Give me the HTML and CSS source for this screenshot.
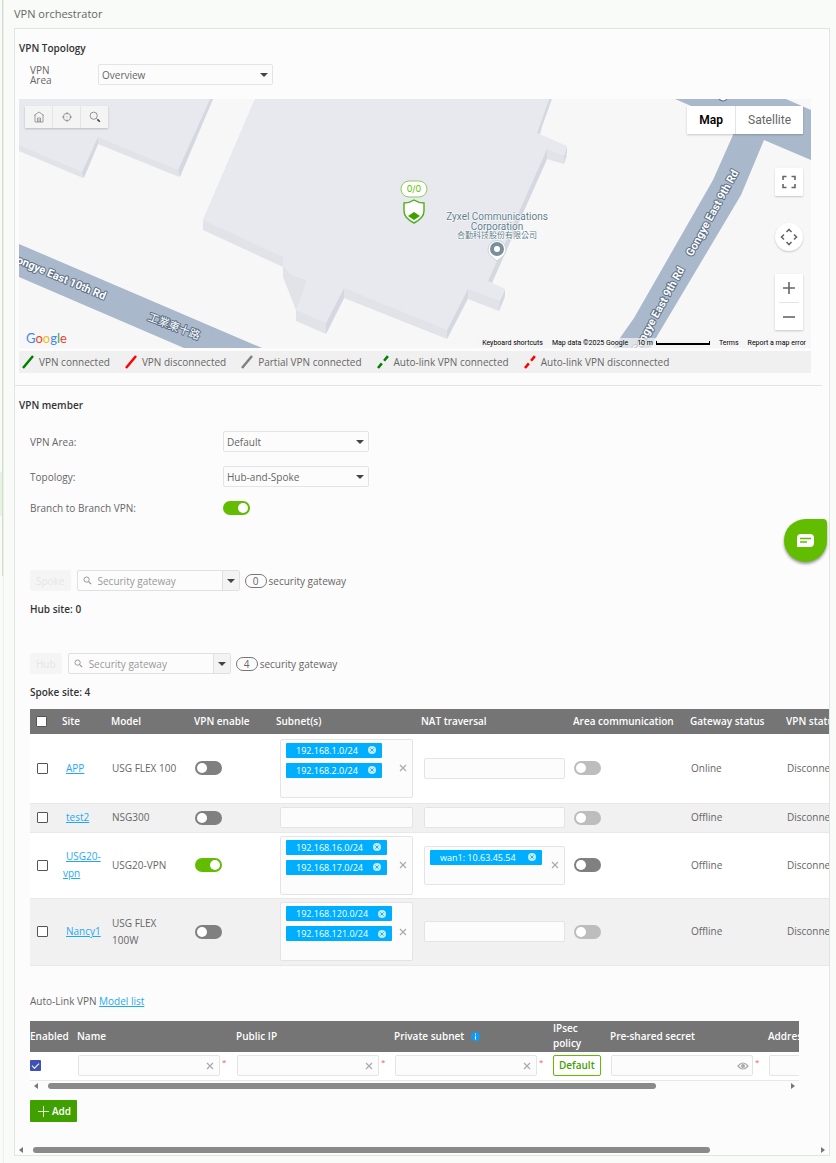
FILE: index.html
```html
<!DOCTYPE html>
<html lang="en">
<head>
    <meta charset="UTF-8">
    <title>VPN orchestrator</title>
    <link rel="stylesheet" href="styles.css">
</head>
<body>
<!-- icons used more than once -->
<svg class="defs" aria-hidden="true">
    <symbol id="x" viewBox="0 0 8 8"><path d="M1 1l6 6M7 1L1 7" fill="none" stroke="#aaa" stroke-width="1.2"/></symbol>
    <symbol id="del" viewBox="0 0 8 8"><circle cx="4" cy="4" r="4" fill="#c4eaff"/><path d="M2.4 2.4l3.2 3.2M5.6 2.4L2.4 5.6" stroke="#00aeff" stroke-width=".9"/></symbol>
    <symbol id="search" viewBox="0 0 10 10"><circle cx="4" cy="4" r="2.9" fill="none" stroke="#999" stroke-width="1.1"/><path d="M6.2 6.2L9 9" stroke="#999" stroke-width="1.4"/></symbol>
</svg>
<div class="side"><div class="side-current"></div></div>
<main class="main">
    <h1>VPN orchestrator</h1>
    <div class="panel">
        <section class="topology">
            <h2>VPN Topology</h2>
            <div class="area-row">
                <label for="overview">VPN Area</label>
                <span class="select"><select id="overview"><option>Overview</option></select></span>
            </div>
            <div class="map">
                <svg class="map-canvas" viewBox="19 99 792 249" preserveAspectRatio="xMidYMid slice">
                    <rect x="19" y="99" width="792" height="249" fill="#f7f7f7"/>
                    <!-- buildings -->
                    <path d="M19 151L83 178 98 144 179 177 213 99H19z" fill="#e1e3e9"/>
                    <path d="M82 172L98 137V144L84 178zM178 170L210 99H213L180 177z" fill="#d5d8e1"/>
                    <path d="M19 145L82 172 98 137 178 170 210 99H19z" fill="#e8e9ee"/>
                    <path d="M255 99H549L538 143 567 156 564 164 547 159 488 291 505 297 499 311 468 299 447 339 344 298 326 334 296 321 296 310 283 277V267L203 230V220z" fill="#e1e3e9"/>
                    <path d="M549 99h3l-13 36-2-2zM547 149v10l-55 124-4-2zM567 146v6l-3 12v-8zM505 289v7l-6 15 1-10zM468 289v9l-21 41v-9zM344 288v10l-18 36v-11z" fill="#d5d8e0"/>
                    <path d="M255 99H549L537 133 567 146 564 156 547 149 488 281 505 289 500 301 468 289 447 330 344 288 326 323 296 310 307 280 291 275 283 266V257L203 220z" fill="#e8e9ee"/>
                    <!-- roads -->
                    <path d="M19 244L262 348H184L19 277z" fill="#a9b8ca"/>
                    <path d="M675 99H786L811 110V160L764 140 741 195 650 348H613L634 318 713 180 733 135V124z" fill="#a9b8ca"/>
                    <g class="road">
                        <text x="104" y="300" text-anchor="end" transform="rotate(23 104 300)">Gongye East 10th Rd</text>
                        <text class="road-cjk" x="147" y="320" transform="rotate(21 147 320)">工業東十路</text>
                        <text x="692" y="257" transform="rotate(-61 692 257)">Gongye East 9th Rd</text>
                        <text x="638" y="354" transform="rotate(-61 638 354)">Gongye East 9th Rd</text>
                        <text x="724" y="102" transform="rotate(-61 724 102)">Gongye</text>
                    </g>
                    <g class="poi">
                        <text x="497" y="220">Zyxel Communications</text>
                        <text x="497" y="230">Corporation</text>
                        <text class="poi-cjk" x="497" y="238">合勤科技股份有限公司</text>
                    </g>
                    <path d="M497 261l-5-4a9 9 0 1 1 10 0z" fill="#fff" stroke="#ccd1d5"/>
                    <circle cx="497" cy="249" r="5" fill="#fff" stroke="#78909c" stroke-width="4"/>
                    <rect x="401" y="181" width="26" height="16" rx="8" fill="#fff" stroke="#8fca55"/>
                    <text class="count" x="414" y="192">0/0</text>
                    <path d="M414 200c3 2 6 3 10 3v8c0 6-4 9-10 12-6-3-10-6-10-12v-8c4 0 7-1 10-3z" fill="#fff" stroke="#4cae14" stroke-width="1.4"/>
                    <path d="M414 212l6 4-6 4-6-4z" fill="#3fa000"/>
                </svg>
                <div class="map-tools">
                    <button aria-label="Home"><svg width="12" height="12" viewBox="0 0 12 12" fill="none" stroke="#888" stroke-width=".8"><path d="M1 4.500L6 1l5 3.500M2 4v7h8V4M4.500 11V7h3v4M6 8v3"/></svg></button>
                    <button aria-label="Locate"><svg width="10" height="10" viewBox="0 0 10 10" fill="none" stroke="#888" stroke-width=".8"><circle cx="5" cy="5" r="3.700"/><path d="M5 0v2.500M5 7.500V10M0 5h2.500M7.500 5H10M4.500 5h1"/></svg></button>
                    <button aria-label="Search"><svg width="12" height="12" viewBox="0 0 12 12" fill="none" stroke="#888" stroke-width=".9"><circle cx="4.700" cy="4.700" r="3.600"/><path d="M7.400 7.400l1 1"/><path d="M8.400 8.400l2.400 2.400" stroke="#444" stroke-width="1.600"/></svg></button>
                </div>
                <div class="map-type"><button class="on">Map</button><button>Satellite</button></div>
                <div class="map-nav">
                    <button class="full" aria-label="Fullscreen"><svg width="14" height="14" viewBox="0 0 14 14" fill="none" stroke="#666" stroke-width="1.600"><path d="M1 5V1.500h3.500M9.500 1.500H13V5M13 9v3.500H9.500M4.500 12.500H1V9"/></svg></button>
                    <button class="pan" aria-label="Move map"><svg width="18" height="18" viewBox="0 0 18 18" fill="none" stroke="#666" stroke-width="1.600"><path d="M6.500 4L9 1.500 11.500 4M6.500 14L9 16.500l2.500-2.500M4 6.500L1.500 9 4 11.500M14 6.500L16.500 9 14 11.500"/></svg></button>
                    <div class="zoom">
                        <button aria-label="Zoom in"><svg width="12" height="12" viewBox="0 0 12 12" stroke="#666" stroke-width="1.600"><path d="M0 6h12M6 0v12"/></svg></button>
                        <button aria-label="Zoom out"><svg width="12" height="12" viewBox="0 0 12 12" stroke="#666" stroke-width="1.600"><path d="M0 6h12"/></svg></button>
                    </div>
                </div>
                <div class="logo"><span class="b">G</span><span class="r">o</span><span class="y">o</span><span class="b">g</span><span class="g">l</span><span class="r">e</span></div>
                <div class="map-foot">
                    <span>Keyboard shortcuts</span>
                    <span>Map data ©2025 Google</span>
                    <span class="scale">10 m<i></i></span>
                    <span>Terms</span>
                    <span>Report a map error</span>
                </div>
            </div>
            <ul class="legend">
                <li><svg width="12" height="14" viewBox="0 0 12 14"><path d="M1 13L11 1" stroke="green" stroke-width="2.500"/></svg>VPN connected</li>
                <li><svg width="12" height="14" viewBox="0 0 12 14"><path d="M1 13L11 1" stroke="red" stroke-width="2.500"/></svg>VPN disconnected</li>
                <li><svg width="12" height="14" viewBox="0 0 12 14"><path d="M1 13L11 1" stroke="gray" stroke-width="2.500"/></svg>Partial VPN connected</li>
                <li><svg width="12" height="14" viewBox="0 0 12 14"><path d="M1 13L11 1" stroke="green" stroke-width="2.500" stroke-dasharray="6 3.500"/></svg>Auto-link VPN connected</li>
                <li><svg width="12" height="14" viewBox="0 0 12 14"><path d="M1 13L11 1" stroke="red" stroke-width="2.500" stroke-dasharray="6 3.500"/></svg>Auto-link VPN disconnected</li>
            </ul>
        </section>
        <hr>
        <section class="member">
            <h2>VPN member</h2>
            <div class="form">
                <label for="area">VPN Area:</label>
                <span class="select"><select id="area"><option>Default</option></select></span>
                <label for="topo">Topology:</label>
                <span class="select"><select id="topo"><option>Hub-and-Spoke</option></select></span>
                <label for="branch">Branch to Branch VPN:</label>
                <input class="switch" type="checkbox" id="branch" checked>
            </div>

            <div class="filter">
                <button class="ghost" disabled>Spoke</button>
                <div class="combo"><svg width="9" height="9"><use href="#search"/></svg><input type="text" placeholder="Security gateway" aria-label="Hub security gateway"><button class="drop" aria-label="Hub options"></button></div>
                <span class="pill">0</span><span>security gateway</span>
            </div>
            <h3>Hub site: 0</h3>

            <div class="filter second">
                <button class="ghost" disabled>Hub</button>
                <div class="combo"><svg width="9" height="9"><use href="#search"/></svg><input type="text" placeholder="Security gateway" aria-label="Spoke security gateway"><button class="drop" aria-label="Spoke options"></button></div>
                <span class="pill">4</span><span>security gateway</span>
            </div>
            <h3>Spoke site: 4</h3>

            <div class="clip">
                <table class="sites">
                    <colgroup><col class="w27"><col class="w49"><col class="w83"><col class="w82"><col class="w145"><col class="w152"><col class="w117"><col class="w96"><col class="w96"></colgroup>
                    <thead>
                    <tr><th><input class="box" type="checkbox" aria-label="Select all"></th><th>Site</th><th>Model</th><th>VPN enable</th><th>Subnet(s)</th><th>NAT traversal</th><th>Area communication</th><th>Gateway status</th><th>VPN status</th></tr>
                    </thead>
                    <tbody>
                    <tr>
                        <td><input class="box" type="checkbox" aria-label="Select APP"></td>
                        <td><a href="#">APP</a></td>
                        <td>USG FLEX 100</td>
                        <td><input class="switch" type="checkbox" aria-label="Enable APP"></td>
                        <td><div class="chips"><div class="list"><span class="chip">192.168.1.0/24<svg width="8" height="8"><use href="#del"/></svg></span><span class="chip">192.168.2.0/24<svg width="8" height="8"><use href="#del"/></svg></span></div><button class="clear" aria-label="Clear"><svg width="8" height="8"><use href="#x"/></svg></button></div></td>
                        <td><input class="text" type="text" aria-label="NAT traversal APP"></td>
                        <td><input class="switch" type="checkbox" aria-label="Area communication APP" disabled></td>
                        <td>Online</td><td>Disconnected</td>
                    </tr>
                    <tr>
                        <td><input class="box" type="checkbox" aria-label="Select test2"></td>
                        <td><a href="#">test2</a></td>
                        <td>NSG300</td>
                        <td><input class="switch" type="checkbox" aria-label="Enable test2"></td>
                        <td><input class="text" type="text" aria-label="Subnets test2"></td>
                        <td><input class="text" type="text" aria-label="NAT traversal test2"></td>
                        <td><input class="switch" type="checkbox" aria-label="Area communication test2" disabled></td>
                        <td>Offline</td><td>Disconnected</td>
                    </tr>
                    <tr>
                        <td><input class="box" type="checkbox" aria-label="Select USG20-vpn"></td>
                        <td><a href="#">USG20-vpn</a></td>
                        <td>USG20-VPN</td>
                        <td><input class="switch" type="checkbox" aria-label="Enable USG20-vpn" checked></td>
                        <td><div class="chips"><div class="list"><span class="chip">192.168.16.0/24<svg width="8" height="8"><use href="#del"/></svg></span><span class="chip">192.168.17.0/24<svg width="8" height="8"><use href="#del"/></svg></span></div><button class="clear" aria-label="Clear"><svg width="8" height="8"><use href="#x"/></svg></button></div></td>
                        <td><div class="chips"><div class="list"><span class="chip wide">wan1: 10.63.45.54<svg width="8" height="8"><use href="#del"/></svg></span></div><button class="clear" aria-label="Clear"><svg width="8" height="8"><use href="#x"/></svg></button></div></td>
                        <td><input class="switch" type="checkbox" aria-label="Area communication USG20-vpn"></td>
                        <td>Offline</td><td>Disconnected</td>
                    </tr>
                    <tr>
                        <td><input class="box" type="checkbox" aria-label="Select Nancy1"></td>
                        <td><a href="#">Nancy1</a></td>
                        <td>USG FLEX 100W</td>
                        <td><input class="switch" type="checkbox" aria-label="Enable Nancy1"></td>
                        <td><div class="chips"><div class="list"><span class="chip">192.168.120.0/24<svg width="8" height="8"><use href="#del"/></svg></span><span class="chip">192.168.121.0/24<svg width="8" height="8"><use href="#del"/></svg></span></div><button class="clear" aria-label="Clear"><svg width="8" height="8"><use href="#x"/></svg></button></div></td>
                        <td><input class="text" type="text" aria-label="NAT traversal Nancy1"></td>
                        <td><input class="switch" type="checkbox" aria-label="Area communication Nancy1" disabled></td>
                        <td>Offline</td><td>Disconnected</td>
                    </tr>
                    </tbody>
                </table>
            </div>

            <p class="auto">Auto-Link VPN <a href="#">Model list</a></p>
            <div class="auto-wrap">
                <div class="clip">
                    <table class="links">
                        <colgroup><col class="w47"><col class="w159"><col class="w158"><col class="w159"><col class="w57"><col class="w158"><col class="w159"></colgroup>
                        <thead>
                        <tr><th>Enabled</th><th>Name</th><th>Public IP</th><th>Private subnet <svg class="info" width="9" height="9" viewBox="0 0 9 9"><circle cx="4.500" cy="4.500" r="4.500" fill="#0a9bff"/><path d="M4.500 1.500v1.200M4.500 3.800V7.500" stroke="#fff"/></svg></th><th>IPsec policy</th><th>Pre-shared secret</th><th>Address</th></tr>
                        </thead>
                        <tbody>
                        <tr>
                            <td><input class="box blue" type="checkbox" aria-label="Enabled" checked></td>
                            <td><div class="field"><input class="text" type="text" aria-label="Name"><button class="clear" aria-label="Clear name"><svg width="8" height="8"><use href="#x"/></svg></button><b>*</b></div></td>
                            <td><div class="field"><input class="text" type="text" aria-label="Public IP"><button class="clear" aria-label="Clear public IP"><svg width="8" height="8"><use href="#x"/></svg></button><b>*</b></div></td>
                            <td><div class="field"><input class="text" type="text" aria-label="Private subnet"><button class="clear" aria-label="Clear private subnet"><svg width="8" height="8"><use href="#x"/></svg></button><b>*</b></div></td>
                            <td><button class="policy">Default</button></td>
                            <td><div class="field"><input class="text" type="password" aria-label="Pre-shared secret"><button class="clear" aria-label="Show secret"><svg width="12" height="8" viewBox="0 0 12 8"><path d="M1 4q5-6 10 0-5 6-10 0z" fill="none" stroke="#aaa" stroke-width="1.200"/><circle cx="6" cy="4" r="2" fill="#aaa"/></svg></button><b>*</b></div></td>
                            <td><div class="field"><input class="text" type="text" aria-label="Address"></div></td>
                        </tr>
                        </tbody>
                    </table>
                </div>
                <div class="scroll"><div class="track"><div class="thumb inner"></div></div></div>
            </div>
            <button class="add"><svg width="11" height="11" viewBox="0 0 11 11" stroke="#fff" stroke-width=".8"><path d="M0 5.500h11M5.500 0v11"/></svg>Add</button>
        </section>
        <div class="scroll outer-scroll"><div class="track"><div class="thumb outer"></div></div></div>
    </div>
</main>
<button class="chat" aria-label="Chat"><svg width="17" height="13" viewBox="0 0 17 13"><path d="M4 0h9q4 0 4 4v5q0 4-4 4H0V4q0-4 4-4z" fill="#fff"/><path d="M3 4.500h11M3 8h7" stroke="#62bd00" stroke-width="1.400"/></svg></button>
</body>
</html>
```

FILE: styles.css
```css
* {
    box-sizing: border-box;
    margin: 0;
    padding: 0;
}

body {
    display: flex;
    min-height: 100vh;
    background: #f9fbf8;
    color: #666;
    font: 10px/14px "Open Sans", "Noto Sans CJK TC", sans-serif;
    overflow: hidden;
}

button, input, select {
    font: inherit;
    color: inherit;
    border: 0;
    background: none;
}

button {
    display: flex;
    align-items: center;
    justify-content: center;
}

svg {
    flex: none;
}

.defs {
    position: absolute;
    width: 0;
    height: 0;
}

.side {
    width: 3px;
    height: 576px;
    padding-top: 472px;
    border-right: 1px solid #d4dccf;
}

.side-current {
    height: 44px;
    background: #e6f4df;
}

.main {
    flex: 1;
    min-width: 0;
    padding: 0 6px 0 10px;
    border-left: 1px solid #eceeeb;
}

h1 {
    font-size: 11px;
    font-weight: 400;
    line-height: 28px;
}

h2, h3 {
    font-size: 10px;
    font-weight: 600;
    color: #333;
}

.panel {
    border: 1px solid #e2e4e1;
    background: #fcfcfc;
}

.topology {
    padding: 12px 18px 12px 4px;
}

.area-row {
    display: flex;
    align-items: center;
    margin: 9px 0 14px 11px;
}

.area-row label {
    width: 68px;
    padding-right: 36px;
    line-height: 10px;
}

.area-row .select {
    width: 175px;
}

.select {
    position: relative;
}

.select select {
    display: block;
    width: 100%;
    height: 21px;
    padding: 0 3px;
    border: 1px solid #e4e4e4;
    border-radius: 2px;
    appearance: none;
}

.select::after, .drop::after {
    content: "";
    border: 4px solid transparent;
    border-top-color: #444;
    border-bottom: 0;
}

.select::after {
    position: absolute;
    right: 5px;
    top: 9px;
}

/* map */
.map {
    position: relative;
    height: 249px;
    overflow: hidden;
    font-family: Roboto, sans-serif;
}

.map-canvas {
    display: block;
    width: 100%;
    height: 100%;
}

.road text {
    font: 700 11px Roboto, "Noto Sans CJK TC", sans-serif;
    fill: #fff;
    stroke: #5d6f87;
    stroke-width: 2px;
    stroke-linejoin: round;
    paint-order: stroke;
}

.road .road-cjk {
    font-weight: 400;
}

.poi text {
    font: 10px Roboto, sans-serif;
    fill: #607d8b;
    text-anchor: middle;
    stroke: #fff;
    stroke-width: 1px;
    paint-order: stroke;
}

.poi .poi-cjk {
    font: 8px "Noto Sans CJK TC", sans-serif;
}

.count {
    font: 9px Inter, sans-serif;
    fill: #62bd00;
    text-anchor: middle;
}

.map-tools, .map-type, .map-nav, .map-foot, .logo {
    position: absolute;
}

.map-tools, .map-type, .full, .pan, .zoom {
    display: flex;
    background: #fff;
    box-shadow: 0 1px 2px rgba(0, 0, 0, 0.2);
}

.map-tools {
    left: 6px;
    top: 7px;
}

.map-tools button {
    width: 27px;
    height: 22px;
    background: #f4f4f4;
}

.map-tools button + button, .map-type button + button {
    box-sizing: content-box;
    border-left: 1px solid #e4e4e4;
}

.map-type {
    right: 8px;
    top: 7px;
    font-size: 12px;
}

.map-type button {
    height: 28px;
    padding: 0 12px;
}

.map-type .on {
    color: #000;
    font-weight: 600;
}

.map-nav {
    top: 69px;
    right: 8px;
}

.full, .pan {
    width: 28px;
    height: 28px;
    margin-bottom: 27px;
    border-radius: 1px;
}

.pan {
    margin-bottom: 23px;
    border-radius: 50%;
}

.zoom {
    flex-direction: column;
    padding: 0 4px;
}

.zoom button {
    height: 28px;
}

.zoom button + button {
    border-top: 1px solid #e4e4e4;
}

.logo {
    left: 7px;
    bottom: 2px;
    font: 13px/16px Lato, sans-serif;
}

.b { color: #4285f4; }
.r { color: #ea4335; }
.y { color: #fbbc04; }
.g { color: #34a853; }

.map-foot {
    display: flex;
    gap: 9px;
    right: 0;
    bottom: 0;
    padding: 0 5px;
    background: rgba(245, 245, 245, 0.7);
    color: #000;
    font-size: 7px;
    line-height: 10px;
}

.scale {
    display: flex;
    gap: 3px;
}

.scale i {
    width: 54px;
    height: 4px;
    margin-top: 3px;
    border: 2px solid #000;
    border-width: 0 1px 2px;
}

.legend {
    display: flex;
    gap: 15px;
    height: 22px;
    margin-top: 3px;
    padding-left: 3px;
    background: #f0f0f0;
    list-style: none;
}

.legend li {
    display: flex;
    align-items: center;
    gap: 5px;
}

hr {
    border: 0;
    border-top: 1px solid #e4e4e4;
    margin-right: 7px;
}

.member {
    padding: 12px 0 0 15px;
}

.member h2 {
    margin: 0 0 19px -11px;
}

.form {
    display: grid;
    grid-template-columns: 193px 146px;
    row-gap: 14px;
    align-items: center;
}

.switch {
    display: block;
    width: 27px;
    height: 14px;
    padding: 2px;
    border-radius: 7px;
    background: #808080;
    appearance: none;
}

.switch::before {
    content: "";
    display: block;
    width: 10px;
    height: 10px;
    border-radius: 50%;
    background: #fff;
}

.switch:checked {
    background: #62bd00;
}

.switch:checked::before {
    margin-left: auto;
}

.switch:disabled {
    background: #bdbdbd;
}

.filter {
    display: flex;
    align-items: center;
    margin: 55px 0 11px;
}

.filter.second {
    margin-top: 37px;
}

.ghost {
    height: 21px;
    margin-right: 6px;
    padding: 0 6px;
    border-radius: 2px;
    background: #f5f5f5;
    color: #e6e6e6;
}

.combo {
    display: flex;
    align-items: center;
    width: 163px;
    height: 21px;
    margin-right: 5px;
    padding-left: 5px;
    border: 1px solid #e0e0e0;
    border-radius: 2px;
}

.combo input {
    flex: 1;
    min-width: 0;
    padding-left: 6px;
}

.combo input::placeholder {
    color: #999;
}

.drop {
    width: 17px;
    height: 19px;
    background: #f3f3f3;
    border-left: 1px solid #e0e0e0;
}

.pill {
    width: 22px;
    margin-right: 2px;
    border: 1px solid #777;
    border-radius: 7px;
    line-height: 12px;
    text-align: center;
}

/* tables */
.clip {
    margin-top: 10px;
    overflow: hidden;
}

table {
    border-collapse: collapse;
    table-layout: fixed;
    width: 0;
    background: #fff;
}

.w27 { width: 27px; }
.w47 { width: 47px; }
.w49 { width: 49px; }
.w57 { width: 57px; }
.w82 { width: 82px; }
.w83 { width: 83px; }
.w96 { width: 96px; }
.w117 { width: 117px; }
.w145 { width: 145px; }
.w152 { width: 152px; }
.w158 { width: 158px; }
.w159 { width: 159px; }

th, td {
    padding: 0 4px 0 6px;
    line-height: 17px;
    text-align: left;
}

th {
    height: 25px;
    padding-left: 5px;
    background: #757575;
    color: #fff;
    font-weight: 600;
    white-space: nowrap;
}

td {
    height: 67px;
    border-bottom: 1px solid #e8e8e8;
}

.sites tr:nth-child(1) td {
    height: 69px;
}

.sites tr:nth-child(2) td {
    height: 29px;
}

.sites tr:nth-child(3) td {
    height: 66px;
}

.sites tbody tr:nth-child(even) {
    background: #f1f1f1;
}

.sites td:nth-child(2) {
    padding-right: 0;
}

.sites td a {
    margin-left: 3px;
}

a {
    color: #1fa8f5;
}

.box {
    display: block;
    width: 11px;
    height: 11px;
    margin: 0 1px;
    border: 1px solid #555;
    border-radius: 1px;
    background: #fff;
    appearance: none;
}

.chips, .text {
    display: flex;
    width: 133px;
    margin-left: 3px;
    border: 1px solid #e4e4e4;
    border-radius: 2px;
    background: #fcfcfc;
}

td:nth-child(6) .chips, td:nth-child(6) .text {
    width: 141px;
    margin-left: 2px;
}

.text {
    height: 21px;
}

.chips {
    justify-content: space-between;
    padding: 3px 5px 19px;
}

.list {
    display: flex;
    flex-direction: column;
    align-items: flex-start;
    gap: 5px;
}

.chip {
    display: flex;
    align-items: center;
    gap: 10px;
    height: 15px;
    padding: 0 6px 0 10px;
    border-radius: 1px;
    background: #00aeff;
    color: #fff;
    font-size: 9px;
    white-space: nowrap;
}

.wide {
    gap: 12px;
}

.clear {
    width: 8px;
}

.chips .clear {
    margin-bottom: -16px;
}

.auto {
    margin-top: 28px;
}

.auto-wrap {
    margin: 13px 30px 9px 0;
}

.auto-wrap .clip {
    margin: 0;
}

.links th, .links td {
    padding: 0;
}

.links th {
    height: 31px;
    line-height: 15px;
}

.links th:nth-child(5) {
    padding-right: 8px;
    white-space: normal;
}

.links td {
    height: 29px;
}

.links td .text {
    width: 142px;
    margin: 0;
}

.info {
    margin-left: 4px;
    vertical-align: middle;
}

.links .blue {
    margin: 0;
    border: 0;
    background: #3f51b5;
}

.blue::before {
    content: "";
    display: block;
    width: 6px;
    height: 3px;
    margin: 3px 2px;
    border: solid #fff;
    border-width: 0 0 1px 1px;
    transform: rotate(-45deg);
}

.field {
    display: flex;
    margin-left: 1px;
}

.field .clear {
    width: 12px;
    margin: 0 4px 0 -16px;
}

.field b {
    margin-left: 2px;
    color: #ff5a5a;
    font-size: 8px;
    font-weight: 400;
    line-height: 14px;
}

.policy {
    height: 21px;
    padding: 0 5px;
    border: 1px solid #62bd00;
    border-radius: 2px;
    color: #3fa000;
    font-weight: 600;
}

.scroll {
    display: flex;
    align-items: center;
    justify-content: space-between;
    height: 10px;
    padding: 0 4px;
}

.scroll::before, .scroll::after {
    content: "";
    border: 3px solid transparent;
    border-right: 4px solid #777;
    border-left: 0;
}

.scroll::after {
    border-right: 0;
    border-left: 4px solid #777;
}

.track {
    flex: 1;
    margin: 0 10px;
}

.thumb {
    height: 6px;
    border-radius: 3px;
    background: #8a8a8a;
}

.inner {
    width: 83%;
}

.outer {
    width: 87%;
}

.outer-scroll {
    margin-top: 23px;
}

.add {
    height: 22px;
    gap: 3px;
    padding: 0 6px 0 8px;
    border-radius: 1px;
    background: #3fa000;
    color: #fff;
    font-weight: 600;
}

.chat {
    position: fixed;
    top: 519px;
    right: 9px;
    width: 43px;
    height: 43px;
    border-radius: 50% 4px 50% 50%;
    background: #62bd00;
    box-shadow: 0 2px 3px rgba(0, 0, 0, 0.4);
}
```
